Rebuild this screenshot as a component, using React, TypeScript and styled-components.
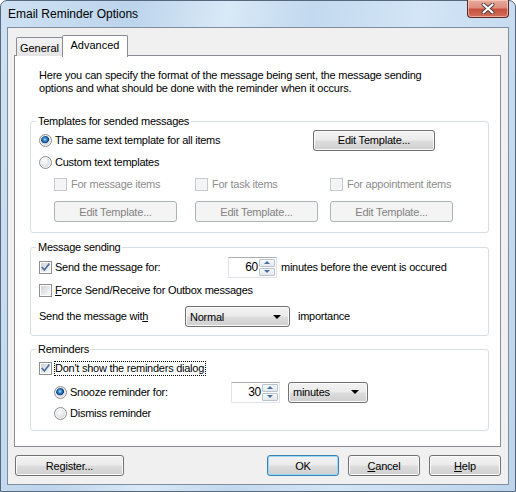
import React from "react";
import styled, { createGlobalStyle, css } from "styled-components";

const GlobalStyle = createGlobalStyle`
  html, body {
    margin: 0;
    padding: 0;
    background: #ffffff;
  }
  body {
    font-family: "Liberation Sans", Arial, sans-serif;
    font-size: 11px;
    color: #000;
  }
`;

// Window chrome
const Window = styled.div`
  width: 516px;
  height: 492px;
  box-sizing: border-box;
  display: flex;
  flex-direction: column;
  padding: 0 6px 6px 6px;
  border: 1px solid #56687c;
  border-radius: 7px 7px 0 0;
  background: linear-gradient(
    100deg,
    #cfe2f4 0%,
    #bcd4ec 22%,
    #d9e9f7 38%,
    #c2d9ef 52%,
    #d3e5f6 70%,
    #bcd4ec 100%
  );
`;

const TitleBar = styled.div`
  height: 26px;
  display: flex;
  align-items: center;
  justify-content: space-between;
  padding-left: 1px;
`;

const Title = styled.span`
  font-size: 12px;
  letter-spacing: 0;
`;

const CloseButton = styled.div`
  align-self: flex-start;
  margin-top: -1px;
  width: 42px;
  height: 18px;
  box-sizing: border-box;
  display: flex;
  align-items: center;
  justify-content: center;
  border: 1px solid #5b2a25;
  border-top: none;
  border-radius: 0 0 4px 4px;
  background: linear-gradient(#e8ab9c 0%, #dd8f7f 45%, #c8513f 55%, #d2705e 100%);
  box-shadow: inset 0 0 0 1px rgba(255, 220, 210, 0.55);
`;

const Client = styled.div`
  flex: 1;
  display: flex;
  flex-direction: column;
  padding: 7px 7px 8px 6px;
  border: 1px solid #7f8d9c;
  background: #f0f0f0;
`;

// Tabs
const TabStrip = styled.div`
  display: flex;
  align-items: flex-end;
  height: 21px;
  padding-left: 2px;
  position: relative;
  z-index: 1;
`;

const Tab = styled.div<{ $active?: boolean }>`
  box-sizing: border-box;
  display: flex;
  align-items: center;
  justify-content: center;
  border: 1px solid #898c95;
  border-bottom: none;
  border-radius: 2px 2px 0 0;
  ${(p) =>
    p.$active
      ? css`
          height: 22px;
          width: 66px;
          margin-left: -1px;
          margin-bottom: -1px;
          padding-bottom: 3px;
          background: #ffffff;
        `
      : css`
          height: 19px;
          width: 47px;
          padding-top: 1px;
          background: linear-gradient(#f3f3f3, #e4e4e4);
        `}
`;

const Pane = styled.div`
  flex: 1;
  margin-top: -1px;
  padding: 13px 11px 0 15px;
  border: 1px solid #898c95;
  background: #ffffff;
`;

const Intro = styled.p`
  margin: 0 0 0 9px;
  line-height: 13px;
  letter-spacing: -0.2px;
`;

// Group boxes
const Group = styled.div<{ $mt: number; $pb: number }>`
  margin-top: ${(p) => p.$mt}px;
  padding: 0 8px ${(p) => p.$pb}px 8px;
  border: 1px solid #d5dfe5;
  border-radius: 3px;
`;

const Caption = styled.div`
  display: table;
  margin: -7px 0 0 -3px;
  padding: 0 2px;
  line-height: 13px;
  background: #ffffff;
  letter-spacing: -0.25px;
`;

const Row = styled.div<{ $h: number; $mt?: number; $indent?: number }>`
  display: flex;
  align-items: center;
  height: ${(p) => p.$h}px;
  margin-top: ${(p) => p.$mt ?? 0}px;
  padding-left: ${(p) => p.$indent ?? 0}px;
`;

const TemplateGrid = styled.div`
  display: grid;
  grid-template-columns: 141px 135px 123px;
  grid-template-rows: 23px 21px;
  row-gap: 5px;
  padding-left: 15px;
  align-items: center;
`;

const Choice = styled.label<{ $w?: number; $gap?: number }>`
  display: flex;
  align-items: center;
  gap: ${(p) => p.$gap ?? 3}px;
  width: ${(p) => (p.$w ? `${p.$w}px` : "auto")};
  flex-shrink: 0;
`;

const Text = styled.span<{ $disabled?: boolean; $focus?: boolean; $ml?: number; $w?: number }>`
  white-space: nowrap;
  line-height: 13px;
  letter-spacing: -0.25px;
  margin-left: ${(p) => p.$ml ?? 0}px;
  width: ${(p) => (p.$w ? `${p.$w}px` : "auto")};
  color: ${(p) => (p.$disabled ? "#8d8d8d" : "#000")};
  ${(p) =>
    p.$focus &&
    css`
      border: 1px dotted #000;
      padding: 0 1px 0 0;
    `}
  u {
    text-decoration-thickness: 1px;
    text-underline-offset: 1px;
  }
`;

// Check boxes and radio buttons
const Box = styled.span<{ $disabled?: boolean }>`
  width: 13px;
  height: 13px;
  box-sizing: border-box;
  flex-shrink: 0;
  display: flex;
  align-items: center;
  justify-content: center;
  border: 1px solid ${(p) => (p.$disabled ? "#c5c8cc" : "#8e8f8f")};
  box-shadow: inset 0 0 0 1px ${(p) => (p.$disabled ? "#f7f7f7" : "#ffffff")};
  background: ${(p) =>
    p.$disabled ? "#f4f4f4" : "linear-gradient(135deg, #cbced3 0%, #eef0f2 70%, #f8f8f8 100%)"};
`;

const Radio = styled.span<{ $checked?: boolean }>`
  width: 13px;
  height: 13px;
  box-sizing: border-box;
  flex-shrink: 0;
  border-radius: 50%;
  border: 1px solid #8e8f8f;
  box-shadow: inset 0 0 0 1px #f8f8f8;
  background: ${(p) =>
    p.$checked
      ? "radial-gradient(circle at 45% 40%, #a8dcfb 0px, #3d8fd6 1.6px, #114c8f 3.3px, #0d3e78 3.7px, transparent 4.2px), radial-gradient(circle at 50% 50%, #e3e5e8 0%, #cfd2d6 100%)"
      : "radial-gradient(circle at 40% 35%, #ffffff 0%, #e6e7e9 45%, #c9ccd0 100%)"};
`;

const CheckBox = ({ checked, disabled }: { checked?: boolean; disabled?: boolean }) => (
  <Box $disabled={disabled}>
    {checked && (
      <svg width="9" height="9" viewBox="0 0 9 9">
        <path d="M1.2 4.6 L3.4 7 L7.9 1.2" fill="none" stroke="#4c6c9e" strokeWidth="1.6" strokeLinecap="square" />
      </svg>
    )}
  </Box>
);

// Push buttons
const Button = styled.div<{ $w: number; $disabled?: boolean; $default?: boolean; $h?: number }>`
  width: ${(p) => p.$w}px;
  height: ${(p) => p.$h ?? 21}px;
  box-sizing: border-box;
  flex-shrink: 0;
  display: flex;
  align-items: center;
  justify-content: center;
  border-radius: 3px;
  letter-spacing: -0.2px;
  white-space: nowrap;
  border: 1px solid ${(p) => (p.$disabled ? "#adb2b5" : p.$default ? "#3c7fb1" : "#707070")};
  color: ${(p) => (p.$disabled ? "#838383" : "#000")};
  background: ${(p) =>
    p.$disabled
      ? "#f4f4f4"
      : "linear-gradient(#f2f2f2 0%, #ebebeb 48%, #dddddd 52%, #cfcfcf 100%)"};
  box-shadow: inset 0 0 0 1px
    ${(p) => (p.$disabled ? "#f4f4f4" : p.$default ? "#96d9f9" : "#fbfbfb")};
  u {
    text-underline-offset: 1px;
  }
`;

// Numeric field with up/down arrows
const Spin = styled.div<{ $w: number }>`
  width: ${(p) => p.$w}px;
  height: 21px;
  box-sizing: border-box;
  flex-shrink: 0;
  display: flex;
  border: 1px solid #e2e3ea;
  border-top-color: #abadb3;
  background: #ffffff;
`;

const SpinValue = styled.span`
  flex: 1;
  text-align: right;
  padding-right: 1px;
  line-height: 19px;
  font-size: 12px;
  letter-spacing: -0.3px;
`;

const SpinButtons = styled.div`
  width: 16px;
  display: flex;
  flex-direction: column;
  padding: 1px 1px 1px 0;
  gap: 1px;
`;

const SpinHalf = styled.span<{ $down?: boolean }>`
  flex: 1;
  display: flex;
  align-items: center;
  justify-content: center;
  border: 1px solid #b9c3cf;
  border-radius: 1px;
  background: linear-gradient(#f7f9fb, #e4e9ef);
  &::after {
    content: "";
    border-left: 3px solid transparent;
    border-right: 3px solid transparent;
    ${(p) =>
      p.$down
        ? css`border-top: 3px solid #4a6ea3;`
        : css`border-bottom: 3px solid #4a6ea3;`}
  }
`;

const Spinner = ({ value, width }: { value: string; width: number }) => (
  <Spin $w={width}>
    <SpinValue>{value}</SpinValue>
    <SpinButtons>
      <SpinHalf />
      <SpinHalf $down />
    </SpinButtons>
  </Spin>
);

// Drop-down list
const Combo = styled.div<{ $w: number; $ml?: number }>`
  width: ${(p) => p.$w}px;
  height: 21px;
  box-sizing: border-box;
  flex-shrink: 0;
  margin-left: ${(p) => p.$ml ?? 0}px;
  display: flex;
  align-items: center;
  justify-content: space-between;
  padding: 0 8px 0 4px;
  border: 1px solid #707070;
  border-radius: 3px;
  letter-spacing: -0.25px;
  background: linear-gradient(#f2f2f2 0%, #ebebeb 48%, #dddddd 52%, #cfcfcf 100%);
  box-shadow: inset 0 0 0 1px #fbfbfb;
  &::after {
    content: "";
    border-left: 4px solid transparent;
    border-right: 4px solid transparent;
    border-top: 4px solid #000;
  }
`;

const ButtonBar = styled.div`
  display: flex;
  align-items: center;
  gap: 9px;
  margin-top: 8px;
  padding-left: 1px;
`;

const BarSpacer = styled.div`
  flex: 1;
`;

export default function App() {
  return (
    <>
      <GlobalStyle />
      <Window>
        <TitleBar>
          <Title>Email Reminder Options</Title>
          <CloseButton>
            <svg width="14" height="11" viewBox="0 0 14 11">
              <path d="M2.5 1.5 L11.5 9.5 M11.5 1.5 L2.5 9.5" stroke="#4a3a3a" strokeWidth="4" strokeLinecap="round" />
              <path d="M2.5 1.5 L11.5 9.5 M11.5 1.5 L2.5 9.5" stroke="#ffffff" strokeWidth="2.2" strokeLinecap="round" />
            </svg>
          </CloseButton>
        </TitleBar>
        <Client>
          <TabStrip>
            <Tab>General</Tab>
            <Tab $active>Advanced</Tab>
          </TabStrip>
          <Pane>
            <Intro>
              Here you can specify the format of the message being sent, the message sending
              <br />
              options and what should be done with the reminder when it occurs.
            </Intro>

            <Group $mt={26} $pb={10}>
              <Caption>Templates for sended messages</Caption>
              <Row $h={22} $mt={1}>
                <Choice $w={274}>
                  <Radio $checked />
                  <Text>The same text template for all items</Text>
                </Choice>
                <Button $w={122}>Edit Template...</Button>
              </Row>
              <Row $h={22}>
                <Choice>
                  <Radio />
                  <Text>Custom text templates</Text>
                </Choice>
              </Row>
              <TemplateGrid>
                <Choice $gap={4}>
                  <CheckBox disabled />
                  <Text $disabled>For message items</Text>
                </Choice>
                <Choice $gap={4}>
                  <CheckBox disabled />
                  <Text $disabled>For task items</Text>
                </Choice>
                <Choice $gap={4}>
                  <CheckBox disabled />
                  <Text $disabled>For appointment items</Text>
                </Choice>
                <Button $w={123} $disabled>Edit Template...</Button>
                <Button $w={123} $disabled>Edit Template...</Button>
                <Button $w={123} $disabled>Edit Template...</Button>
              </TemplateGrid>
            </Group>

            <Group $mt={14} $pb={5}>
              <Caption>Message sending</Caption>
              <Row $h={22} $mt={2}>
                <Choice $w={189}>
                  <CheckBox checked />
                  <Text>Send the message for:</Text>
                </Choice>
                <Spinner value="60" width={49} />
                <Text $ml={4}>minutes before the event is occured</Text>
              </Row>
              <Row $h={25}>
                <Choice>
                  <CheckBox />
                  <Text>
                    <u>F</u>orce Send/Receive for Outbox messages
                  </Text>
                </Choice>
              </Row>
              <Row $h={27}>
                <Text $w={146}>
                  Send the message wit<u>h</u>
                </Text>
                <Combo $w={105}>Normal</Combo>
                <Text $ml={8}>importance</Text>
              </Row>
            </Group>

            <Group $mt={13} $pb={6}>
              <Caption>Reminders</Caption>
              <Row $h={25}>
                <Choice $gap={2}>
                  <CheckBox checked />
                  <Text $focus>Don't show the reminders dialog</Text>
                </Choice>
              </Row>
              <Row $h={22} $indent={15}>
                <Choice $w={177}>
                  <Radio $checked />
                  <Text>Snooze reminder for:</Text>
                </Choice>
                <Spinner value="30" width={49} />
                <Combo $w={80} $ml={8}>minutes</Combo>
              </Row>
              <Row $h={21} $indent={15}>
                <Choice>
                  <Radio />
                  <Text>Dismiss reminder</Text>
                </Choice>
              </Row>
            </Group>
          </Pane>
          <ButtonBar>
            <Button $w={109}>Register...</Button>
            <BarSpacer />
            <Button $w={72} $default>OK</Button>
            <Button $w={72}>
              <u>C</u>ancel
            </Button>
            <Button $w={72}>
              <u>H</u>elp
            </Button>
          </ButtonBar>
        </Client>
      </Window>
    </>
  );
}
